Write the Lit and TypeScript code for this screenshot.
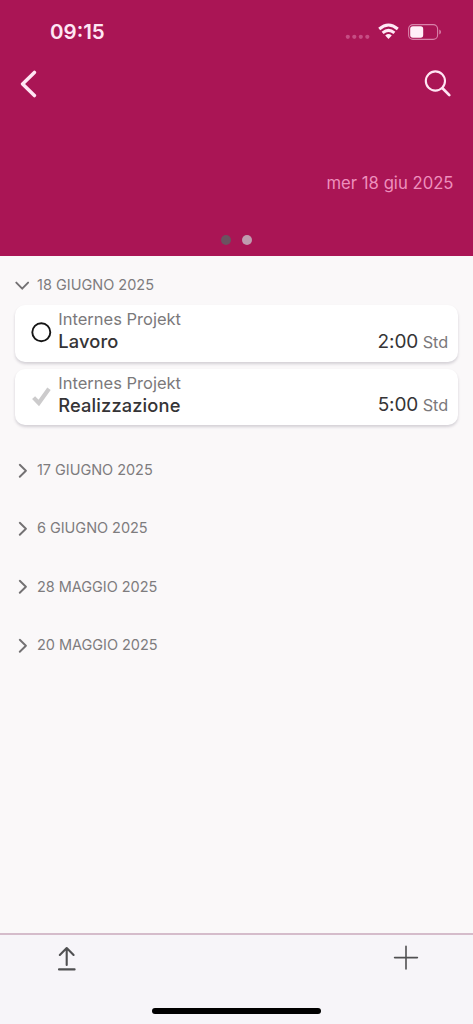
import { LitElement, html, css, svg, nothing } from "lit";
import { customElement, state } from "lit/decorators.js";

interface Entry {
  project: string;
  task: string;
  hours: string;
  done: boolean;
}

interface Day {
  label: string;
  entries: Entry[];
}

const signalDots = [0, 1, 2, 3].map((i) => svg`<circle cx=${2.8 + i * 6.5} cy="2.8" r="2.1" />`);

@customElement("app-root")
export class AppRoot extends LitElement {
  @state() private open = 0;

  private days: Day[] = [
    {
      label: "18 GIUGNO 2025",
      entries: [
        { project: "Internes Projekt", task: "Lavoro", hours: "2:00", done: false },
        { project: "Internes Projekt", task: "Realizzazione", hours: "5:00", done: true },
      ],
    },
    { label: "17 GIUGNO 2025", entries: [] },
    { label: "6 GIUGNO 2025", entries: [] },
    { label: "28 MAGGIO 2025", entries: [] },
    { label: "20 MAGGIO 2025", entries: [] },
  ];

  static styles = css`
    :host {
      display: flex;
      flex-direction: column;
      height: 100vh;
      overflow: hidden;
      background: #faf8f9;
      font-family: Inter, "Liberation Sans", sans-serif;
      color: #353436;
    }
    * {
      box-sizing: border-box;
    }
    svg {
      display: block;
      fill: none;
      stroke-linecap: round;
      stroke-linejoin: round;
      flex: none;
    }
    .header {
      height: 256px;
      flex: none;
      display: flex;
      flex-direction: column;
      background: #aa1555;
      color: #ffe6f4;
    }
    .status {
      height: 62px;
      display: flex;
      align-items: center;
      justify-content: space-between;
      padding: 1px 32px 0 50px;
    }
    .time {
      font-size: 20.5px;
      font-weight: 600;
      letter-spacing: 0;
    }
    .indicators {
      display: flex;
      align-items: center;
    }
    .signal {
      fill: #c64d84;
      margin: 10px 8px 0 0;
    }
    .wifi {
      margin: -1px 9px 0 0;
    }
    .nav {
      height: 44px;
      display: flex;
      align-items: center;
      justify-content: space-between;
      padding: 0 21px 0 19px;
    }
    .date {
      margin: 66px 19.5px 0 0;
      height: 22px;
      line-height: 23px;
      text-align: right;
      font-size: 16.7px;
      color: #ee8fbd;
    }
    .pages {
      display: flex;
      justify-content: center;
      gap: 11px;
      margin-top: 41px;
    }
    .page {
      width: 10px;
      height: 10px;
      border-radius: 50%;
      background: #bf9caf;
    }
    .page.current {
      background: #6b5260;
    }
    .list {
      flex: 1;
      padding: 0 15px;
    }
    .day {
      height: 58.2px;
      display: flex;
      align-items: center;
      font-size: 14.5px;
      letter-spacing: -0.04px;
      color: #7e7c7e;
      stroke: #737173;
    }
    .day.open {
      height: 49px;
      padding-top: 8px;
      letter-spacing: 0;
    }
    .label {
      padding-bottom: 0.6px;
    }
    .day svg {
      margin-right: 7px;
    }
    .cards {
      display: flex;
      flex-direction: column;
      gap: 7px;
      margin-bottom: 16px;
    }
    .card {
      height: 56.5px;
      display: flex;
      border-radius: 10px;
      background: #fff;
      box-shadow: 0 2px 3px rgba(60, 50, 75, 0.2);
      padding: 3px 10px 0 15px;
    }
    .mark {
      width: 28.3px;
      padding-top: 12px;
    }
    .names {
      flex: 1;
      line-height: 22px;
    }
    .project {
      font-size: 16.5px;
      color: #7b797b;
    }
    .task {
      font-size: 18.3px;
      line-height: 23px;
      font-weight: 500;
      letter-spacing: 0.13px;
    }
    .hours {
      align-self: flex-start;
      margin-top: 22.5px;
      line-height: 22px;
      font-size: 19px;
      letter-spacing: -0.1px;
    }
    .unit {
      font-size: 16.3px;
      color: #7b797b;
    }
    .footer {
      height: 91px;
      flex: none;
      border-top: 2px solid #d5bccb;
      background: #f7f5f9;
      display: flex;
      flex-direction: column;
      justify-content: space-between;
      align-items: center;
      padding-bottom: 10px;
    }
    .tools {
      width: 100%;
      height: 46px;
      display: flex;
      justify-content: space-between;
      align-items: center;
      padding: 0 54px 0 54px;
      stroke: #505052;
    }
    .home {
      width: 169px;
      height: 6px;
      border-radius: 3px;
      background: #000;
    }
  `;

  private renderMark(done: boolean) {
    return done
      ? html`<svg width="23" height="24" viewBox="0 0 23 24" stroke="#cccbcc">
          <path d="M3.6 13.6 8.8 19 19 4.8" stroke-width="4.2" stroke-linecap="butt" stroke-linejoin="miter" />
        </svg>`
      : html`<svg width="23" height="24" viewBox="0 0 23 24" stroke="#151515">
          <circle cx="11.3" cy="12.2" r="9" stroke-width="1.9" />
        </svg>`;
  }

  private renderCard(e: Entry) {
    return html`<div class="card">
      <div class="mark">${this.renderMark(e.done)}</div>
      <div class="names">
        <div class="project">${e.project}</div>
        <div class="task">${e.task}</div>
      </div>
      <div class="hours">${e.hours}<span class="unit"> Std</span></div>
    </div>`;
  }

  private renderDay(day: Day, i: number) {
    const open = i === this.open;
    return html`<div class="day ${open ? "open" : ""}" @click=${() => (this.open = i)}>
        <svg width="15" height="16" viewBox="0 0 15 16" stroke-width="1.9">
          <path d=${open ? "M1.3 5.6 7.2 11.7 13.1 5.6" : "M4.8 2.8 10.9 8.8 4.8 14.8"} />
        </svg>
        <span class="label">${day.label}</span>
      </div>
      ${open ? html`<div class="cards">${day.entries.map((e) => this.renderCard(e))}</div>` : nothing}`;
  }

  render() {
    return html`
      <div class="header">
        <div class="status">
          <div class="time">09:15</div>
          <div class="indicators">
            <svg class="signal" width="25" height="5" viewBox="0 0 25 5">${signalDots}</svg>
            <svg class="wifi" width="21" height="16" viewBox="0 0 21 16" stroke="#ffeaf6" stroke-width="3">
              <path d="M1.2 6Q10.5-2 19.8 6" stroke-linecap="butt" />
              <path d="M4.6 9.9Q10.5 4.9 16.4 9.9" stroke-linecap="butt" />
              <path d="M7.2 12.5Q10.5 9.7 13.8 12.5L10.5 16Z" fill="#ffeaf6" stroke="none" />
            </svg>
            <svg width="33" height="16" viewBox="0 0 33 16">
              <rect x=".6" y=".6" width="29" height="14.8" rx="4.4" stroke="#d983aa" stroke-width="1.1" />
              <rect x="2.2" y="2.3" width="13" height="11.4" rx="2.6" fill="#ffeff8" />
              <path d="M31.3 5.6Q33 6.2 33 8T31.3 10.4Z" fill="#d983aa" />
            </svg>
          </div>
        </div>
        <div class="nav">
          <svg width="20" height="28" viewBox="0 0 20 28" stroke="#ffe6f4" stroke-width="3.5">
            <path d="M15.4 2.4 3.6 14 15.4 25.6" />
          </svg>
          <svg width="28" height="28" viewBox="0 0 28 28" stroke="#ffe6f4">
            <circle cx="11.4" cy="11" r="9.6" stroke-width="2.1" />
            <path d="M18.5 18.3 25.3 25.1" stroke-width="2.7" />
          </svg>
        </div>
        <div class="date">mer 18 giu 2025</div>
        <div class="pages">
          <div class="page current"></div>
          <div class="page"></div>
        </div>
      </div>
      <div class="list">${this.days.map((d, i) => this.renderDay(d, i))}</div>
      <div class="footer">
        <div class="tools">
          <svg width="26" height="26" viewBox="0 0 26 26" stroke-width="2.1">
            <path d="M12.7 20V3.4M5.8 9.9 12.7 3 19.6 9.9M5 24.4H20.6" />
          </svg>
          <svg width="26" height="26" viewBox="0 0 26 26" stroke-width="1.6">
            <path d="M13 1.2V24M1.6 12.6H24.4" />
          </svg>
        </div>
        <div class="home"></div>
      </div>
    `;
  }
}
